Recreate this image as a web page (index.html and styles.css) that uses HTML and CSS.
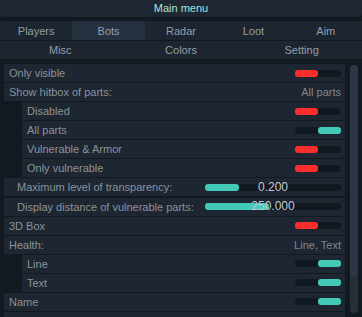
FILE: index.html
```html
<!DOCTYPE html>
<html lang="en">
<head>
    <meta charset="UTF-8">
    <title>Main menu</title>
    <link rel="stylesheet" href="styles.css">
</head>
<body>
    <div class="title">Main menu</div>

    <div class="tabs tabs-5">
        <div class="tab">Players</div>
        <div class="tab active">Bots</div>
        <div class="tab">Radar</div>
        <div class="tab">Loot</div>
        <div class="tab">Aim</div>
    </div>
    <div class="tabs tabs-3">
        <div class="tab">Misc</div>
        <div class="tab">Colors</div>
        <div class="tab">Setting</div>
    </div>

    <div class="content">
        <div class="list">
            <div class="row"><span>Only visible</span><div class="toggle"></div></div>
            <div class="row"><span>Show hitbox of parts:</span><span class="value">All parts</span></div>
            <div class="row sub"><span>Disabled</span><div class="toggle"></div></div>
            <div class="row sub"><span>All parts</span><div class="toggle on"></div></div>
            <div class="row sub"><span>Vulnerable &amp; Armor</span><div class="toggle"></div></div>
            <div class="row sub"><span>Only vulnerable</span><div class="toggle"></div></div>
            <div class="row slider-row"><span>Maximum level of transparency:</span>
                <div class="slider"><div class="fill" style="width: 25%"></div><span class="num">0.200</span></div>
            </div>
            <div class="row slider-row"><span>Display distance of vulnerable parts:</span>
                <div class="slider"><div class="fill" style="width: 47%"></div><span class="num">250.000</span></div>
            </div>
            <div class="row"><span>3D Box</span><div class="toggle"></div></div>
            <div class="row"><span>Health:</span><span class="value">Line, Text</span></div>
            <div class="row sub"><span>Line</span><div class="toggle on"></div></div>
            <div class="row sub"><span>Text</span><div class="toggle on"></div></div>
            <div class="row"><span>Name</span><div class="toggle on"></div></div>
            <div class="row"></div>
        </div>
        <div class="scrollbar"><div class="thumb"></div></div>
    </div>
</body>
</html>
```

FILE: styles.css
```css
body { margin: 0; background: #131920; font-family: "Liberation Sans", Arial, sans-serif; font-size: 11px; color: #8a939c; overflow: hidden; height: 317px; }

.title { height: 17px; line-height: 17px; text-align: center; background: #1e2732; color: #a9e4e0; border-radius: 0 0 4px 4px; margin-bottom: 4px; font-size: 11px; }

.tabs { display: grid; background: #1d2530; }
.tabs-5 { grid-template-columns: repeat(5, 1fr); height: 19px; margin-bottom: 1px; }
.tabs-3 { grid-template-columns: repeat(3, 1fr); height: 18px; margin-bottom: 5px; }
.tab { display: flex; align-items: center; justify-content: center; color: #949ea8; }
.tab.active { background: #263140; }

.content { display: flex; }
.list { width: 341px; margin-left: 4px; display: flex; flex-direction: column; gap: 1.08px; }
.row { height: 18px; background: #1e2631; display: flex; align-items: center; justify-content: space-between; padding: 0 4px 0 5px; flex-shrink: 0; }
.row.sub { margin-left: 18px; }
.row.slider-row { padding-left: 13px; }
.value { color: #7d8690; }

.toggle { width: 46px; height: 7px; border-radius: 4px; background: #111820; position: relative; }
.toggle::after { content: ""; position: absolute; left: 0; top: 0; width: 23px; height: 7px; border-radius: 3px; background: #ff2e2e; }
.toggle.on::after { left: 23px; background: #42c9b7; }

.slider { width: 136px; height: 7px; border-radius: 4px; background: #111820; position: relative; flex-shrink: 0; }
.fill { height: 7px; border-radius: 3px; background: #42c9b7; }
.num { position: absolute; left: 0; right: 0; top: -4px; text-align: center; color: #c3cad1; font-size: 12px; line-height: 15px; }

.scrollbar { width: 8px; height: 248px; margin-left: 5px; margin-top: 1px; border-radius: 4px; background: #252e39; }
.thumb { height: 212px; border-radius: 4px; background: #2d3743; }
```
